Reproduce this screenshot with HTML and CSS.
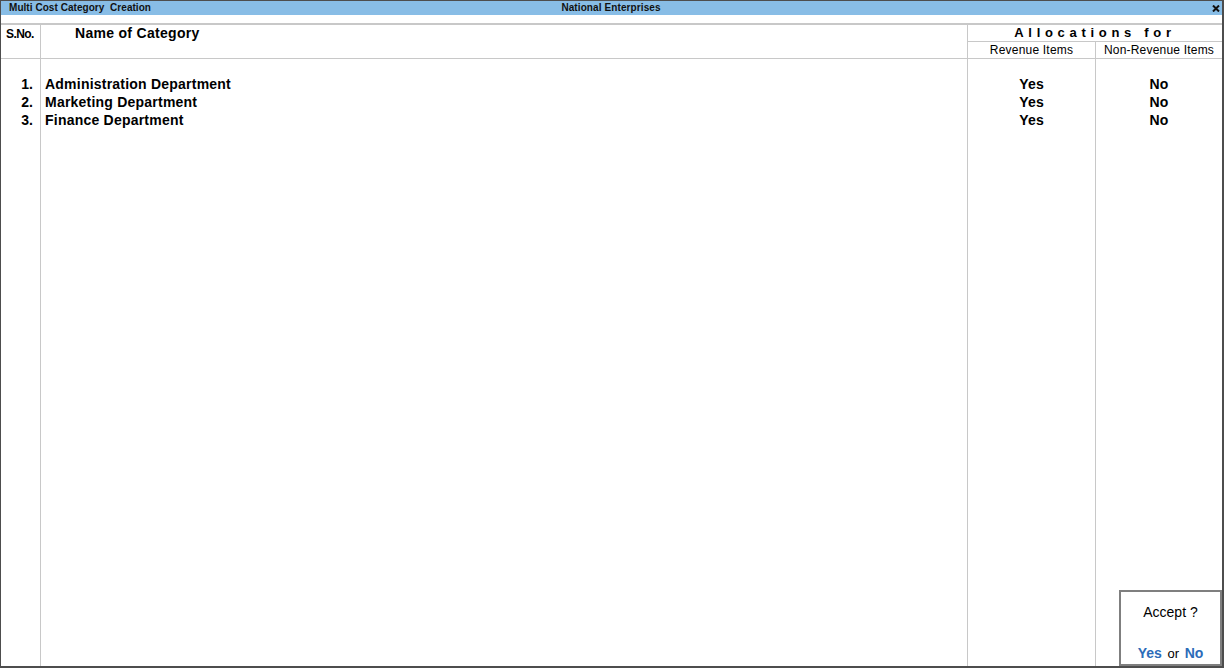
FILE: index.html
```html
<!DOCTYPE html>
<html>
<head>
<meta charset="utf-8">
<link rel="stylesheet" href="styles.css">
</head>
<body>
<div class="window">
  <div class="titlebar">
    <div class="tb-left">Multi Cost Category&nbsp; Creation</div>
    <div class="tb-center">National Enterprises</div>
    <div class="tb-right"><svg width="8" height="7" viewBox="0 0 8 7"><path d="M1 0.5 L7 6.5 M7 0.5 L1 6.5" stroke="#111" stroke-width="2" fill="none"/></svg></div>
  </div>
  <div class="spacer"></div>
  <div class="table">
    <div class="h-sno">S.No.</div>
    <div class="h-name">Name of Category</div>
    <div class="h-alloc">
      <div class="alloc-title">Allocations for</div>
      <div class="alloc-sub">
        <div class="sub sub-rev">Revenue Items</div>
        <div class="sub">Non-Revenue Items</div>
      </div>
    </div>

    <div class="c c1"></div><div class="c c2"></div><div class="c c3"></div><div class="c c4"></div>

    <div class="c c1 num">1.</div><div class="c c2 name">Administration Department</div><div class="c c3 val">Yes</div><div class="c c4 val">No</div>
    <div class="c c1 num">2.</div><div class="c c2 name">Marketing Department</div><div class="c c3 val">Yes</div><div class="c c4 val">No</div>
    <div class="c c1 num">3.</div><div class="c c2 name">Finance Department</div><div class="c c3 val">Yes</div><div class="c c4 val">No</div>

    <div class="c c1"></div><div class="c c2"></div><div class="c c3"></div><div class="c c4"></div>
  </div>
  <div class="accept">
    <div class="accept-q">Accept ?</div>
    <div class="accept-a"><span class="opt">Yes</span> or <span class="opt">No</span></div>
  </div>
</div>
</body>
</html>
```

FILE: styles.css
```css
html, body {
  margin: 0;
  padding: 0;
  background: #ffffff;
}
body {
  font-family: "Liberation Sans", Arial, sans-serif;
  color: #000;
}
.window {
  position: relative;
  box-sizing: border-box;
  width: 1224px;
  height: 668px;
  border-top: 1px solid #4d4d4d;
  border-left: 1px solid #4d4d4d;
  border-right: 2px solid #4d4d4d;
  border-bottom: 2px solid #4d4d4d;
  display: flex;
  flex-direction: column;
  overflow: hidden;
}
.titlebar {
  height: 14px;
  background: #88bde6;
  display: flex;
  align-items: center;
  font-size: 10px;
  font-weight: bold;
  color: #111;
  line-height: 14px;
}
.tb-left {
  flex: 1;
  padding-left: 8px;
  letter-spacing: 0.05px;
}
.tb-center {
  flex: 0 0 auto;
  padding-right: 7px;
  letter-spacing: 0.1px;
}
.tb-right {
  flex: 1;
  display: flex;
  justify-content: flex-end;
  padding-right: 2px;
  height: 14px;
  align-items: center;
}
.spacer {
  height: 8px;
  border-bottom: 2px solid #c8c8c8;
}
.table {
  flex: 1;
  display: grid;
  grid-template-columns: 40px 927px 128px 1fr;
  grid-template-rows: 34px 16px 18px 18px 18px 1fr;
}
.h-sno, .h-name, .h-alloc {
  box-sizing: border-box;
  border-bottom: 1px solid #c8c8c8;
}
.h-sno {
  border-right: 1px solid #c8c8c8;
  font-size: 12px;
  font-weight: bold;
  letter-spacing: -0.6px;
  padding: 2px 0 0 5px;
  line-height: 14px;
}
.h-name {
  border-right: 1px solid #c8c8c8;
  font-size: 14px;
  font-weight: bold;
  padding: 0 0 0 34px;
  line-height: 17px;
  letter-spacing: 0.3px;
}
.h-alloc {
  grid-column: 3 / 5;
  display: flex;
  flex-direction: column;
}
.alloc-title {
  box-sizing: border-box;
  height: 17px;
  border-bottom: 1px solid #c8c8c8;
  text-align: center;
  font-size: 13px;
  font-weight: bold;
  letter-spacing: 4.7px;
  line-height: 16px;
}
.alloc-sub {
  flex: 1;
  display: grid;
  grid-template-columns: 128px 1fr;
}
.sub {
  font-size: 12px;
  text-align: center;
  line-height: 16px;
  letter-spacing: 0.2px;
}
.sub-rev {
  border-right: 1px solid #c8c8c8;
}
.c {
  box-sizing: border-box;
  font-size: 14px;
  font-weight: bold;
  line-height: 18px;
}
.c1, .c2, .c3 {
  border-right: 1px solid #c8c8c8;
}
.num {
  text-align: right;
  padding-right: 7px;
}
.name {
  padding-left: 4px;
  letter-spacing: 0.22px;
}
.val {
  text-align: center;
  letter-spacing: 0.2px;
}
.accept {
  position: absolute;
  right: 0;
  bottom: 0;
  box-sizing: border-box;
  width: 103px;
  height: 76px;
  background: #fff;
  border: 2px solid #7f7f7f;
  display: flex;
  flex-direction: column;
  align-items: center;
  font-size: 14px;
}
.accept-q {
  margin-top: 12px;
  line-height: 17px;
}
.accept-a {
  margin-top: auto;
  margin-bottom: 2px;
  line-height: 17px;
  font-size: 13px;
  word-spacing: 2px;
}
.opt {
  color: #2c6cb9;
  font-weight: bold;
  font-size: 14px;
}
```
